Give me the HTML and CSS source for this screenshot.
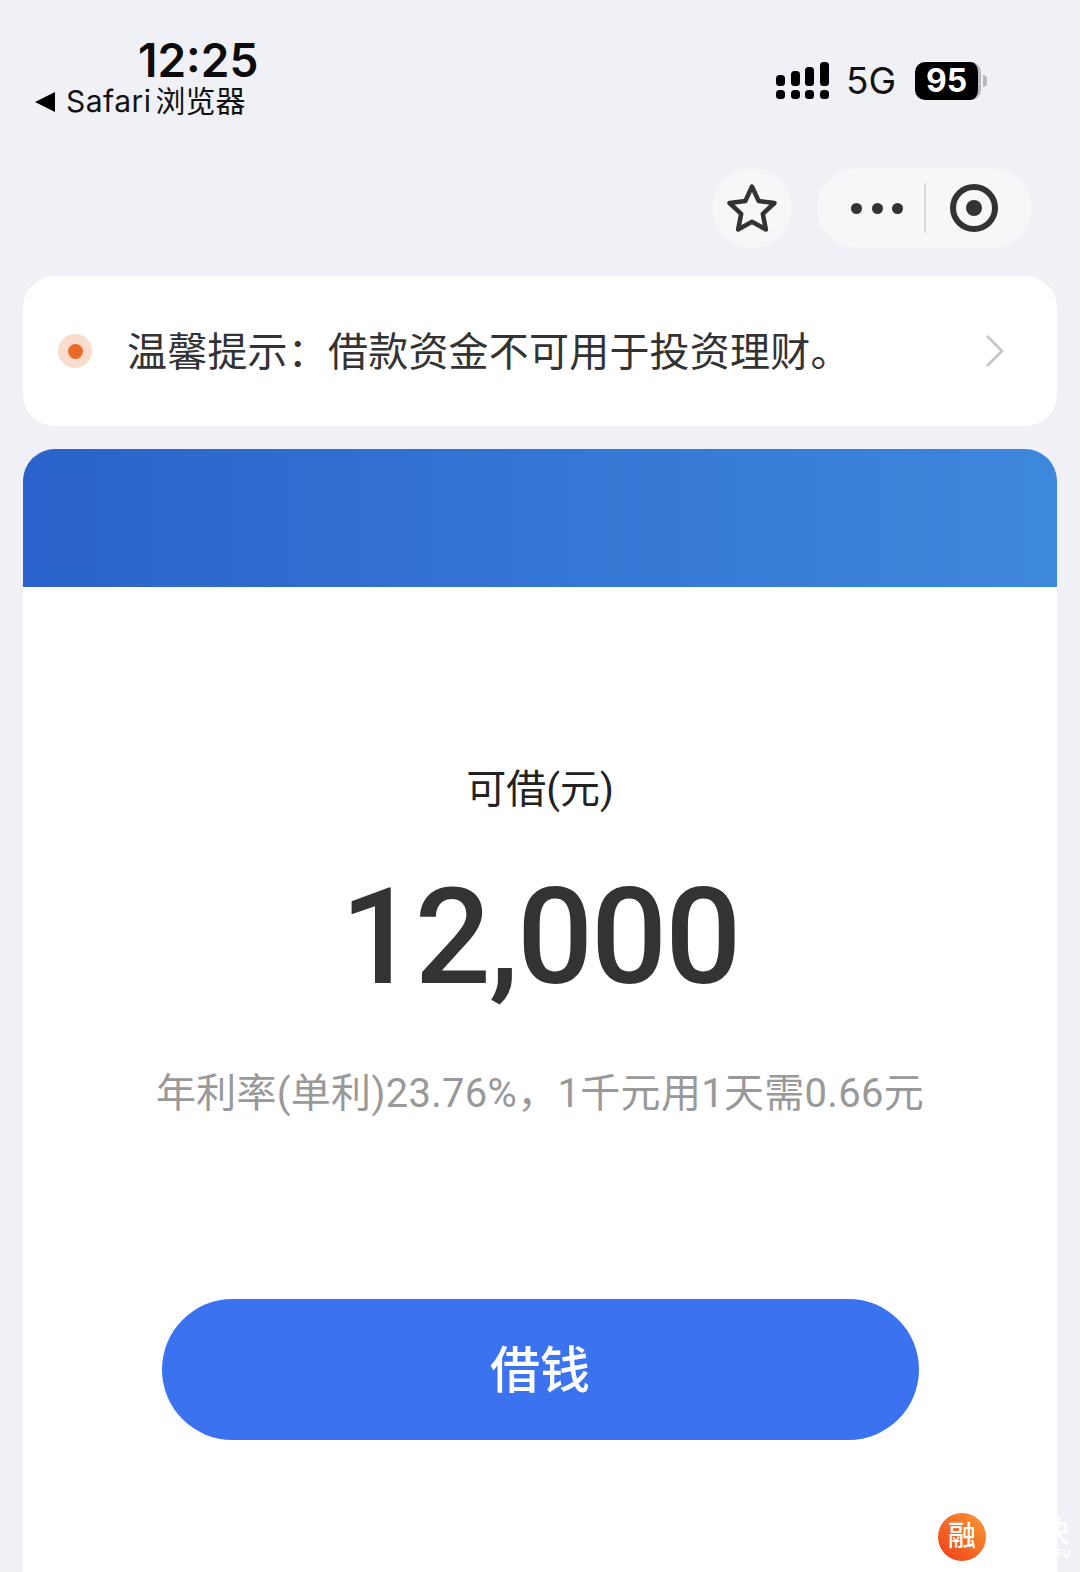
FILE: index.html
```html
<!DOCTYPE html>
<html lang="zh-CN">

<head>
   <meta charset="UTF-8">
   <meta name="viewport" content="width=device-width, initial-scale=1.0">
   <title>借钱</title>
   <link rel="stylesheet" href="styles.css">
</head>

<body>
   <div class="app-wrap">
      <header class="status-bar">
         <div class="status-left">
            <div class="time">12:25</div>
            <div class="back-app"><span class="back-arrow"></span><span class="back-name">Safari</span>浏览器</div>
         </div>
         <div class="status-right">
            <svg class="signal" width="56" height="38" viewBox="0 0 56 38" fill="#000">
               <rect x="0" y="13" width="9" height="11" rx="3.5" />
               <rect x="15" y="9" width="9" height="15" rx="3.5" />
               <rect x="29" y="5" width="9" height="19" rx="3.5" />
               <rect x="44" y="0" width="9" height="24" rx="3.5" />
               <rect x="0" y="28" width="9" height="9" rx="3.5" />
               <rect x="15" y="28" width="9" height="9" rx="3.5" />
               <rect x="29" y="28" width="9" height="9" rx="3.5" />
               <rect x="44" y="28" width="9" height="9" rx="3.5" />
            </svg>
            <span class="net">5G</span>
            <div class="battery">95</div>
            <span class="battery-tip"></span>
         </div>
      </header>

      <div class="capsule-row">
         <div class="star-btn">
            <svg width="52" height="50" viewBox="0 0 52 50" fill="none" stroke="#333" stroke-width="4.500" stroke-linejoin="round">
               <path d="M26 3.5l6.7 14.6 15.8 1.9-11.7 10.8 3.1 15.7L26 38.7l-13.9 7.8 3.1-15.7L3.500 20l15.800-1.900z" />
            </svg>
         </div>
         <div class="capsule">
            <div class="dots"><i></i><i></i><i></i></div>
            <span class="capsule-line"></span>
            <div class="target"><i></i></div>
         </div>
      </div>

      <section class="notice">
         <span class="notice-dot"><i></i></span>
         <p class="notice-text">温馨提示&#xFF1A;借款资金不可用于投资理财。</p>
         <svg class="notice-arrow" width="20" height="34" viewBox="0 0 20 34" fill="none" stroke="#c4c4c4" stroke-width="2.500">
            <path d="M2 2l15 15L2 32" />
         </svg>
      </section>

      <main class="loan-card">
         <div class="loan-head"></div>
         <div class="loan-body">
            <div class="loan-label">可借(元)</div>
            <div class="loan-amount">12,000</div>
            <div class="loan-rate">年利率(单利)23.76%&#xFF0C;1千元用1天需0.66元</div>
            <button class="loan-btn">借钱</button>
         </div>
      </main>

      <!-- watermark, white so only the part on the grey strip shows -->
      <div class="mark">融</div>
      <div class="mark-side">快<span>FU</span></div>
   </div>
</body>

</html>
```

FILE: styles.css
```css
* {
   margin: 0;
   padding: 0;
   box-sizing: border-box;
}

html,
body {
   height: 100%;
   overflow: hidden;
}

body {
   font-family: "Roboto", "Noto Sans CJK SC", sans-serif;
   background: #eff1f6;
   color: #333;
}

.app-wrap {
   position: relative;
   height: 1572px;
   display: flex;
   flex-direction: column;
   padding: 0 23px;
}

.status-bar {
   height: 168px;
   display: flex;
   justify-content: space-between;
   align-items: flex-start;
   flex-shrink: 0;
}

.status-left {
   padding: 35px 0 0 12px;
   display: flex;
   flex-direction: column;
   align-items: flex-start;
}

.time {
   margin-left: 103px;
   font-family: "Inter", sans-serif;
   font-size: 46px;
   font-weight: 600;
   line-height: 50px;
   color: #0c0c0e;
}

.back-app {
   display: flex;
   align-items: center;
   font-family: "Inter", "Noto Sans CJK SC", sans-serif;
   font-size: 30px;
   line-height: 33px;
   color: #111;
   white-space: nowrap;
}

.back-name {
   margin-right: 4px;
   letter-spacing: 0.5px;
}

.back-arrow {
   width: 0;
   height: 0;
   margin-right: 11px;
   border-top: 10px solid transparent;
   border-bottom: 10px solid transparent;
   border-right: 20px solid #000;
}

.status-right {
   padding: 62px 70px 0 0;
   display: flex;
   align-items: center;
}

.signal {
   margin-right: 14px;
}

.net {
   font-family: "Inter", sans-serif;
   font-size: 37px;
   line-height: 38px;
   color: #111;
   margin-right: 19px;
}

.battery {
   width: 66px;
   height: 38px;
   border-radius: 10px;
   background: #000;
   border-right: 3px solid #b9b9c2;
   color: #fff;
   font-family: "Inter", sans-serif;
   font-size: 32px;
   font-weight: 700;
   line-height: 38px;
   text-align: center;
}

.battery-tip {
   width: 4px;
   height: 12px;
   margin-left: 2px;
   border-radius: 0 4px 4px 0;
   background: #b9b9c2;
}

.capsule-row {
   height: 80px;
   display: flex;
   justify-content: flex-end;
   gap: 25px;
   padding-right: 25px;
   flex-shrink: 0;
}

.star-btn {
   width: 80px;
   height: 80px;
   border-radius: 50%;
   background: #f5f7f9;
   display: flex;
   align-items: center;
   justify-content: center;
}

.capsule {
   width: 215px;
   height: 80px;
   border-radius: 40px;
   background: #f5f7f9;
   display: flex;
   align-items: center;
   padding-left: 34px;
}

.dots {
   display: flex;
   gap: 9.500px;
}

.dots i {
   width: 11px;
   height: 11px;
   border-radius: 50%;
   background: #333;
}

.capsule-line {
   width: 2px;
   height: 50px;
   margin: 0 24px 0 21px;
   background: #d9dadd;
}

.target {
   width: 48px;
   height: 48px;
   border: 6px solid #333;
   border-radius: 50%;
   display: flex;
   align-items: center;
   justify-content: center;
}

.target i {
   width: 16px;
   height: 16px;
   border-radius: 50%;
   background: #333;
}

.notice {
   height: 150px;
   margin-top: 28px;
   flex-shrink: 0;
   display: flex;
   align-items: center;
   padding: 0 52px 0 35px;
   background: #fff;
   border-radius: 32px;
}

.notice-dot {
   width: 34px;
   height: 34px;
   margin-right: 35px;
   border-radius: 50%;
   background: #f9dccb;
   display: flex;
   align-items: center;
   justify-content: center;
}

.notice-dot i {
   width: 15px;
   height: 15px;
   border-radius: 50%;
   background: #ea6a2a;
}

.notice-text {
   flex: 1;
   margin-top: -5px;
   font-size: 40px;
   letter-spacing: 0.200px;
   color: #333;
   white-space: nowrap;
}

.loan-card {
   flex: 1;
   margin-top: 23px;
   background: #fff;
   border-radius: 32px 32px 0 0;
   overflow: hidden;
}

.loan-head {
   height: 138px;
   background: linear-gradient(to right, #2a63cb, #3e88dc);
}

.loan-body {
   display: flex;
   flex-direction: column;
   align-items: center;
   padding-top: 175px;
}

.loan-label {
   font-size: 40px;
   line-height: 56px;
   color: #222;
}

.loan-amount {
   margin-top: 45px;
   font-size: 134px;
   font-weight: 500;
   line-height: 150px;
   letter-spacing: -2px;
   color: #333;
}

.loan-rate {
   margin-top: 53px;
   font-size: 40px;
   line-height: 56px;
   letter-spacing: 0.300px;
   color: #999;
   white-space: nowrap;
}

.loan-btn {
   width: 757px;
   height: 141px;
   margin-top: 177px;
   padding-bottom: 8px;
   border: none;
   outline: none;
   border-radius: 71px;
   background: #3a72f0;
   color: #fff;
   font-family: inherit;
   font-size: 50px;
   font-weight: 500;
}

.mark {
   position: absolute;
   left: 938px;
   top: 1513px;
   width: 48px;
   height: 48px;
   border-radius: 50%;
   background: linear-gradient(45deg, #ee3d1a, #f89a32);
   color: #fff;
   font-size: 28px;
   font-weight: 500;
   line-height: 48px;
   text-align: center;
}

.mark-side {
   position: absolute;
   left: 1040px;
   top: 1516px;
   width: 30px;
   color: #fff;
   font-size: 30px;
   line-height: 32px;
   text-align: right;
}

.mark-side span {
   display: block;
   font-size: 11px;
   line-height: 12px;
   font-weight: 700;
}
```
